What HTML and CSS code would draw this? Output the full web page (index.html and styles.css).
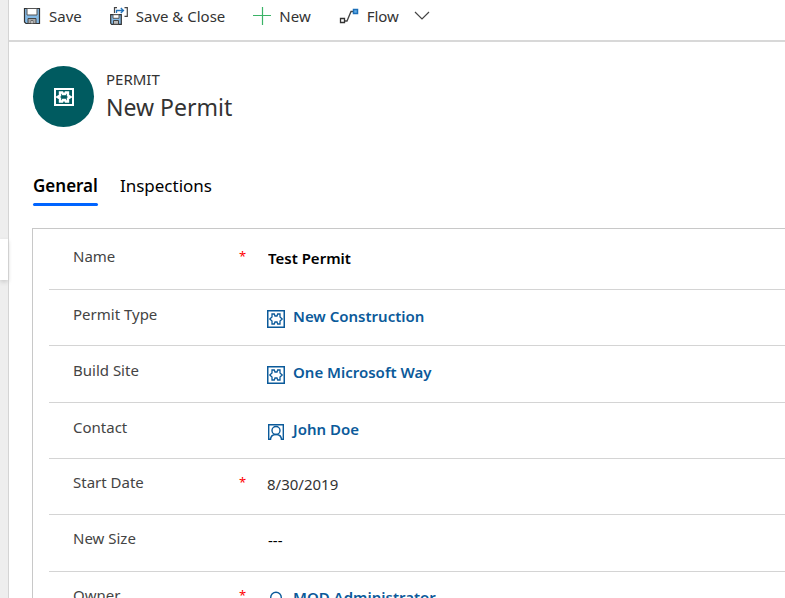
FILE: index.html
```html
<!DOCTYPE html>
<html lang="en">
<head>
<meta charset="utf-8">
<meta name="viewport" content="width=device-width, initial-scale=1">
<title>New Permit</title>
<link rel="stylesheet" href="styles.css">
</head>
<body>
<svg class="sprite" aria-hidden="true">
  <symbol id="entity" viewBox="0 0 18 18">
    <path d="M.75.75h16.500v16.500H.75z" fill="none" stroke="currentColor" stroke-width="1.500"/>
    <path d="M5 4h2.300l.7 2h2l.7-2H13v3l2.200 2-2.200 2v3h-2.300l-.7-2H8l-.7 2H5v-3L2.800 9 5 7z" fill="none" stroke="currentColor" stroke-width="1.300"/>
  </symbol>
  <symbol id="person" viewBox="0 0 18 18">
    <path d="M4 16.300H1.700V1.700h14.600v14.600H14" fill="none" stroke="currentColor" stroke-width="1.400"/>
    <circle cx="9" cy="7.500" r="4" fill="none" stroke="currentColor" stroke-width="1.400"/>
    <path d="M3.500 17c0-3.500 2.300-5.500 5.500-5.500s5.500 2 5.500 5.500" fill="none" stroke="currentColor" stroke-width="1.400"/>
  </symbol>
  <symbol id="user" viewBox="0 0 18 18">
    <circle cx="9" cy="6.500" r="5.300" fill="none" stroke="currentColor" stroke-width="1.400"/>
    <path d="M2 18c0-4 3-6.200 7-6.200s7 2.200 7 6.200" fill="none" stroke="currentColor" stroke-width="1.400"/>
  </symbol>
</svg>
<div class="app">
  <nav class="rail" aria-label="Site map"><div class="rail-item"></div></nav>
  <main class="page">
    <div class="commands">
      <button type="button" class="command">
        <svg class="cmd-icon" viewBox="0 0 18 18" aria-hidden="true"><path d="M1.500 1.500h15v15H3l-1.500-1.500z" fill="#83b9e5" stroke="#333" stroke-width="1.200"/><path d="M4 1.500h10v6.500H4z" fill="#fff" stroke="#555"/><path d="M5 11.500h8v5H5z" fill="#aaa" stroke="#444"/><path d="M8 13.500h2v3H8z" fill="#fff" stroke="#555" stroke-width=".8"/></svg>
        Save
      </button>
      <button type="button" class="command">
        <svg class="cmd-icon" viewBox="0 0 18 18" aria-hidden="true"><path d="M7 .7H4.500V6M14.500.7h2.800v8.600h-2.800" fill="none" stroke="#444" stroke-width="1.200"/><path d="M6.500 6V3.500H13M10.800 1l2.700 2.500L10.800 6" fill="none" stroke="#2272b9" stroke-width="1.300"/><path d="M.7 7.700h10.600v9.600H1.700l-1-1z" fill="#83b9e5" stroke="#333" stroke-width="1.200"/><path d="M3 7.700h6v3.600H3z" fill="#fff" stroke="#555"/><path d="M3.500 13.500h5v3.800h-5z" fill="#bbb" stroke="#444"/></svg>
        Save &amp; Close
      </button>
      <button type="button" class="command">
        <svg class="cmd-icon" viewBox="0 0 18 18" aria-hidden="true"><path d="M9.500 0v18M0 8.500h18" stroke="#3bb367" stroke-width="1.200"/></svg>
        New
      </button>
      <button type="button" class="command">
        <svg class="flow-icon" viewBox="0 0 20 18" aria-hidden="true"><path d="M6 14h2L12 4.500h2" fill="none" stroke="#444" stroke-width="1.300"/><path d="M1.500 11.500h4v4h-4z" fill="#fff" stroke="#333" stroke-width="1.300"/><path d="M14.500 2.500h4v4h-4z" fill="#62aee8" stroke="#1c6fb8" stroke-width="1.500"/></svg>
        Flow
        <svg class="chevron" viewBox="0 0 16 10" aria-hidden="true"><path d="M1 1l7 7 7-7" fill="none" stroke="#444" stroke-width="1.200"/></svg>
      </button>
    </div>

    <header class="record">
      <span class="avatar"><svg class="avatar-icon" viewBox="0 0 20 18" aria-hidden="true"><path d="M1 1h18v16H1z" fill="none" stroke="#fff" stroke-width="2"/><path d="M6 4.500h2.300l.7 1.500h2l.7-1.500H14v3l2.500 1.500-2.500 1.500v3h-2.300L11 12H9l-.7 1.500H6v-3L3.500 9 6 7.500z" fill="none" stroke="#fff" stroke-width="2.400"/></svg></span>
      <div>
        <p class="kind">PERMIT</p>
        <h1 class="title">New Permit</h1>
      </div>
    </header>

    <div class="tabs" role="tablist">
      <button type="button" class="tab active" role="tab" aria-selected="true">General</button>
      <button type="button" class="tab" role="tab" aria-selected="false">Inspections</button>
    </div>

    <form class="card">
      <div class="row first">
        <label class="label" for="name">Name</label><span class="required">*</span>
        <input class="field strong" id="name" type="text" value="Test Permit" required>
      </div>
      <div class="row lookup">
        <label class="label" id="type-label">Permit Type</label><span class="required"></span>
        <a class="link" href="#type" aria-labelledby="type-label type-value"><svg class="icon" aria-hidden="true"><use href="#entity"/></svg><span id="type-value">New Construction</span></a>
      </div>
      <div class="row lookup">
        <label class="label" id="site-label">Build Site</label><span class="required"></span>
        <a class="link" href="#site" aria-labelledby="site-label site-value"><svg class="icon" aria-hidden="true"><use href="#entity"/></svg><span id="site-value">One Microsoft Way</span></a>
      </div>
      <div class="row lookup">
        <label class="label" id="contact-label">Contact</label><span class="required"></span>
        <a class="link" href="#contact" aria-labelledby="contact-label contact-value"><svg class="icon" aria-hidden="true"><use href="#person"/></svg><span id="contact-value">John Doe</span></a>
      </div>
      <div class="row">
        <label class="label" for="start">Start Date</label><span class="required">*</span>
        <input class="field date" id="start" type="text" value="8/30/2019" required>
      </div>
      <div class="row">
        <label class="label" for="size">New Size</label><span class="required"></span>
        <input class="field" id="size" type="text" value="---">
      </div>
      <div class="row">
        <label class="label" id="owner-label">Owner</label><span class="required">*</span>
        <a class="link" href="#owner" aria-labelledby="owner-label owner-value"><svg class="icon" aria-hidden="true"><use href="#user"/></svg><span id="owner-value">MOD Administrator</span></a>
      </div>
    </form>
  </main>
</div>
</body>
</html>
```
FILE: styles.css
```css
* { box-sizing: border-box; }

body {
  margin: 0;
  background: #fff;
  color: #333;
  font: 15px/20px "Noto Sans", "Open Sans", sans-serif;
}

button, input { font: inherit; color: inherit; }

.sprite { position: absolute; width: 0; height: 0; }

.app { display: flex; height: 100vh; overflow: hidden; }

.rail {
  flex: none;
  width: 9px;
  padding-top: 239px;
  background: #eee;
  border-right: 1px solid #d4d4d4;
}

.rail-item { height: 41px; background: #fff; box-shadow: 0 2px 4px #ccc; }

.page { flex: 1; min-width: 0; }

.commands {
  display: flex;
  gap: 28px;
  height: 42px;
  padding: 6px 14px 14px;
  border-bottom: 2px solid #d8d8d8;
}

.command {
  display: flex;
  align-items: center;
  gap: 8px;
  padding: 0;
  border: 0;
  background: none;
  white-space: nowrap;
}

.cmd-icon { width: 18px; height: 18px; }
.flow-icon { width: 20px; height: 18px; }
.chevron { width: 16px; height: 10px; margin-left: 7px; }

.record { display: flex; gap: 12px; padding: 24px 24px 0; }

.avatar {
  display: grid;
  place-items: center;
  width: 61px;
  height: 61px;
  border-radius: 50%;
  background: #005b60;
}

.avatar-icon { width: 20px; height: 18px; }

.kind { margin: 3px 0 0; }

.title { margin: 0; font-size: 23px; line-height: 36px; font-weight: 400; }

.tabs { display: flex; gap: 22px; padding: 47px 24px 0; }

.tab {
  height: 32px;
  padding: 0;
  border: 0;
  background: none;
  color: #000;
  font-size: 17px;
  line-height: 24px;
  display: flex;
  flex-direction: column;
}

.active { font-weight: 600; }
.active::after {
  content: "";
  width: 100%;
  height: 3px;
  margin-top: 5px;
  border-radius: 2px;
  background: #0064ff;
}

.card {
  margin: 22px 0 0 23px;
  padding-left: 16px;
  border: solid #c8c8c8;
  border-width: 1px 0 0 1px;
}

.row {
  display: grid;
  grid-template-columns: 166px 28px 1fr;
  align-items: start;
  height: 56px;
  padding: 13px 0 0 24px;
  border-bottom: 1px solid #d4d4d4;
}

.row:nth-child(3n) { height: 57px; }
.lookup { padding-top: 14px; }
.first { height: 61px; padding-top: 17px; }

.label { color: #444; }
.required { color: #f00; font-size: 13px; }

.field {
  width: 100%;
  height: 20px;
  margin-top: 2px;
  padding: 0 1px;
  border: 0;
  outline: 0;
  background: none;
  color: #000;
}

.strong { font-weight: 600; }
.date { padding: 0; color: #333; }

.link {
  display: flex;
  gap: 8px;
  margin-top: 2px;
  color: #0b5a9a;
  font-weight: 600;
  text-decoration: none;
}

.icon { width: 18px; height: 18px; margin-top: 4px; }
```
